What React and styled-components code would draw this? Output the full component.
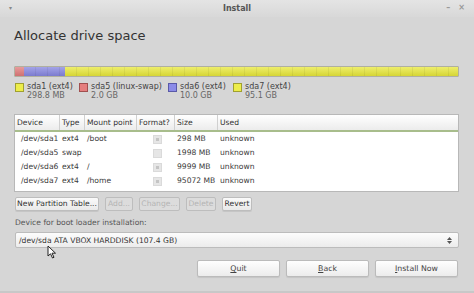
import React from "react";
import styled, { createGlobalStyle } from "styled-components";

const Global = createGlobalStyle`
  html, body { margin: 0; padding: 0; }
  body {
    width: 474px;
    height: 293px;
    overflow: hidden;
    background: #d6d6d6;
    font-family: "DejaVu Sans", sans-serif;
    font-size: 7.6px;
    color: #3c3c3c;
  }
`;

const Window = styled.div`
  width: 474px;
  height: 293px;
  display: flex;
  flex-direction: column;
  background: #d6d6d6;
  position: relative;
`;

const TitleBar = styled.div`
  height: 17px;
  display: flex;
  align-items: center;
  justify-content: center;
  position: relative;
  background: linear-gradient(#e4e4e4, #d8d8d8);
  font-weight: bold;
  font-size: 8px;
  color: #555;
`;

const MenuDot = styled.span`
  position: absolute;
  left: 9px;
  top: 4px;
  font-size: 6px;
  color: #888;
`;

const WinControls = styled.div`
  position: absolute;
  right: 9px;
  top: 3px;
  display: flex;
  gap: 8px;
  color: #999;
  font-size: 8px;
`;

const Content = styled.div`
  display: flex;
  flex-direction: column;
  padding: 0 15px 0 14px;
`;

const Heading = styled.h1`
  margin: 10px 0 0 0;
  font-size: 13px;
  font-weight: normal;
  color: #333;
  height: 18px;
  line-height: 18px;
`;

const Bar = styled.div`
  margin-top: 21px;
  height: 9px;
  display: flex;
  border: 1px solid #b0b0a0;
  border-radius: 1px;
  overflow: hidden;
`;

const Segment = styled.div`
  width: ${(p) => p.w}px;
  flex: ${(p) => (p.grow ? 1 : "none")};
  background: ${(p) => p.color};
  background-image: repeating-linear-gradient(
    90deg,
    transparent 0 11px,
    rgba(0, 0, 0, 0.06) 11px 12px
  ), linear-gradient(rgba(255,255,255,0.25), rgba(0,0,0,0.08));
`;

const Legend = styled.div`
  display: flex;
  margin-top: 5px;
  margin-left: 1px;
  font-size: 8px;
`;

const LegendItem = styled.div`
  display: flex;
  width: ${(p) => p.w}px;
  gap: 3px;
`;

const Swatch = styled.div`
  width: 7px;
  height: 7px;
  margin-top: 1px;
  border: 1px solid ${(p) => p.border};
  background: ${(p) => p.color};
`;

const LegendText = styled.div`
  line-height: 9px;
  color: #444;
  & > div + div { color: #666; }
`;

const Table = styled.div`
  margin-top: 14px;
  height: 76px;
  background: #fff;
  border: 1px solid #b8b8b8;
  display: flex;
  flex-direction: column;
`;

const Cols = "45px 25px 52px 38px 43px 1fr";

const HeaderRow = styled.div`
  display: grid;
  grid-template-columns: ${Cols};
  height: 15px;
  background: linear-gradient(#ffffff, #ececec);
  border-bottom: 2px solid #a8bd8c;
`;

const HeadCell = styled.div`
  padding-left: 2px;
  line-height: 15px;
  color: #333;
  border-right: ${(p) => (p.last ? "none" : "1px solid #d0d0d0")};
`;

const Row = styled.div`
  display: grid;
  grid-template-columns: ${Cols};
  height: 14px;
  line-height: 14px;
  &:first-of-type { margin-top: 1px; }
`;

const Cell = styled.div`
  padding-left: ${(p) => (p.pad ?? 2)}px;
  color: #3a3a3a;
  white-space: nowrap;
  display: flex;
  align-items: center;
  justify-content: ${(p) => (p.center ? "center" : "flex-start")};
`;

const Check = styled.div`
  width: 7px;
  height: 7px;
  background: #e6e6e6;
  border: 1px solid #dadada;
  position: relative;
  &::after {
    content: "";
    display: ${(p) => (p.on ? "block" : "none")};
    position: absolute;
    left: 2px;
    top: 2px;
    width: 3px;
    height: 3px;
    background: #c4c4c4;
  }
`;

const ButtonRow = styled.div`
  display: flex;
  gap: 6px;
  margin-top: 5px;
  margin-left: 1px;
`;

const Btn = styled.button`
  font-family: "DejaVu Sans", sans-serif;
  font-size: 7.6px;
  height: 14px;
  padding: 0;
  width: ${(p) => p.w}px;
  border: 1px solid #bdbdbd;
  border-radius: 2px;
  background: ${(p) => (p.disabled ? "#dcdcdc" : "linear-gradient(#fafafa, #e9e9e9)")};
  color: ${(p) => (p.disabled ? "#b4b4b4" : "#333")};
  box-shadow: ${(p) => (p.disabled ? "none" : "0 1px 0 rgba(0,0,0,0.08)")};
  line-height: 12px;
  white-space: nowrap;
`;

const Label = styled.div`
  margin-top: 7px;
  margin-left: 1px;
  color: #555;
  line-height: 10px;
`;

const Combo = styled.div`
  margin-top: 4px;
  margin-left: 1px;
  height: 14px;
  border: 1px solid #bcbcbc;
  border-radius: 2px;
  background: linear-gradient(#fcfcfc, #ececec);
  display: flex;
  align-items: center;
  justify-content: space-between;
  padding: 0 6px 0 3px;
  color: #333;
  position: relative;
`;

const Arrows = styled.div`
  display: flex;
  flex-direction: column;
  align-items: center;
  gap: 1px;
  color: #555;
`;

const Footer = styled.div`
  display: flex;
  justify-content: flex-end;
  gap: 6px;
  margin-top: 12px;
  margin-right: 1px;
`;

const BigBtn = styled.button`
  font-family: "DejaVu Sans", sans-serif;
  font-size: 7.8px;
  width: 83px;
  height: 17px;
  border: 1px solid #bbb;
  border-radius: 2px;
  background: linear-gradient(#fefefe, #ececec);
  color: #444;
  box-shadow: 0 1px 1px rgba(0,0,0,0.08);
  & u { text-decoration: underline; }
`;

const Cursor = styled.svg`
  position: absolute;
  left: 47px;
  top: 245px;
`;

const BottomEdge = styled.div`
  position: absolute;
  left: 0;
  right: 0;
  bottom: 0;
  height: 2px;
  background: #c8c8c8;
`;

const legend = [
  { name: "sda1 (ext4)", size: "298.8 MB", color: "#eded4a", border: "#a0a030", w: 64 },
  { name: "sda5 (linux-swap)", size: "2.0 GB", color: "#e57f7f", border: "#a05050", w: 89 },
  { name: "sda6 (ext4)", size: "10.0 GB", color: "#8c8ce8", border: "#5a5aa8", w: 65 },
  { name: "sda7 (ext4)", size: "95.1 GB", color: "#eded4a", border: "#a0a030", w: 80 },
];

const rows = [
  { dev: "/dev/sda1", type: "ext4", mount: "/boot", fmt: true, size: "298 MB" },
  { dev: "/dev/sda5", type: "swap", mount: "", fmt: false, size: "1998 MB" },
  { dev: "/dev/sda6", type: "ext4", mount: "/", fmt: true, size: "9999 MB" },
  { dev: "/dev/sda7", type: "ext4", mount: "/home", fmt: true, size: "95072 MB" },
];

export default function App() {
  return (
    <Window>
      <Global />
      <TitleBar>
        <MenuDot>▾</MenuDot>
        Install
        <WinControls>
          <span>–</span>
          <span>×</span>
        </WinControls>
      </TitleBar>
      <Content>
        <Heading>Allocate drive space</Heading>
        <Bar>
          <Segment w={9} color="#e07a7a" />
          <Segment w={41} color="#8585e0" />
          <Segment grow color="#e8e83a" />
        </Bar>
        <Legend>
          {legend.map((l) => (
            <LegendItem key={l.name} w={l.w}>
              <Swatch color={l.color} border={l.border} />
              <LegendText>
                <div>{l.name}</div>
                <div>{l.size}</div>
              </LegendText>
            </LegendItem>
          ))}
        </Legend>
        <Table>
          <HeaderRow>
            <HeadCell>Device</HeadCell>
            <HeadCell>Type</HeadCell>
            <HeadCell>Mount point</HeadCell>
            <HeadCell>Format?</HeadCell>
            <HeadCell>Size</HeadCell>
            <HeadCell last>Used</HeadCell>
          </HeaderRow>
          {rows.map((r) => (
            <Row key={r.dev}>
              <Cell pad={6}>{r.dev}</Cell>
              <Cell>{r.type}</Cell>
              <Cell>{r.mount}</Cell>
              <Cell center>
                <Check on={r.fmt} />
              </Cell>
              <Cell>{r.size}</Cell>
              <Cell>unknown</Cell>
            </Row>
          ))}
        </Table>
        <ButtonRow>
          <Btn w={84}>New Partition Table...</Btn>
          <Btn w={28} disabled>Add...</Btn>
          <Btn w={41} disabled>Change...</Btn>
          <Btn w={30} disabled>Delete</Btn>
          <Btn w={30}>Revert</Btn>
        </ButtonRow>
        <Label>Device for boot loader installation:</Label>
        <Combo>
          <span>/dev/sda ATA VBOX HARDDISK (107.4 GB)</span>
          <Arrows>
            <svg width="5" height="3" viewBox="0 0 5 3"><path d="M0 3 L2.5 0 L5 3 Z" fill="#555" /></svg>
            <svg width="5" height="3" viewBox="0 0 5 3"><path d="M0 0 L2.5 3 L5 0 Z" fill="#555" /></svg>
          </Arrows>
        </Combo>
        <Footer>
          <BigBtn><u>Q</u>uit</BigBtn>
          <BigBtn><u>B</u>ack</BigBtn>
          <BigBtn><u>I</u>nstall Now</BigBtn>
        </Footer>
      </Content>
      <Cursor width="10" height="14" viewBox="0 0 10 14">
        <path d="M1 1 L1 11 L3.5 8.8 L5.5 13 L7 12.3 L5 8.2 L8.5 8.2 Z" fill="#fff" stroke="#222" strokeWidth="1" strokeLinejoin="round" />
      </Cursor>
      <BottomEdge />
    </Window>
  );
}
